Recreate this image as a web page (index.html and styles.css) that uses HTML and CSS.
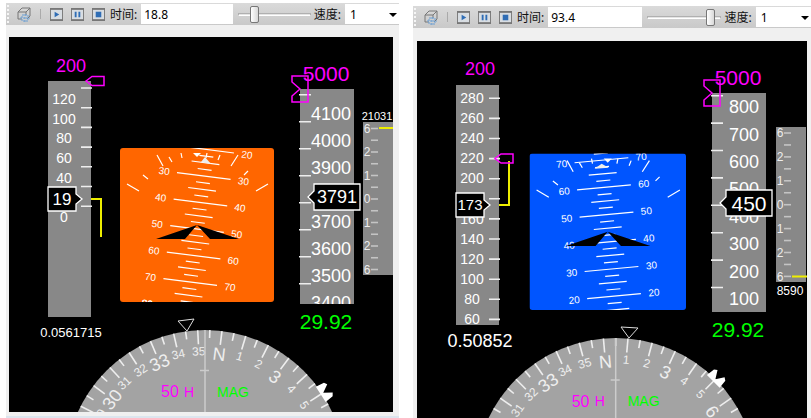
FILE: index.html
```html
<!DOCTYPE html>
<html lang="zh">
<head>
<meta charset="utf-8">
<title>PFD</title>
<link rel="stylesheet" href="styles.css">
</head>
<body>
<main class="screens">

<section class="panel panel-first">
  <div class="toolbar">
    <span class="grip"></span>
    <button class="tool tool-cube" aria-label="3D">
      <svg viewBox="0 0 16 16"><path class="cube" d="M2 6l4-4h8v8l-3 3M2 6h8v3M2 6v7h4M10 6l4-4"/><path class="cube-net" d="M6 9h6v6H6zM4 12h10M9 8v8"/></svg>
    </button>
    <span class="divider"></span>
    <button class="tool" aria-label="play"><svg viewBox="0 0 14 14"><path class="frame" d="M0 0h14v14H0z"/><path class="face" d="M1 2h12v10H1z"/><path class="mark" d="M5 4l5 3-5 3z"/></svg></button>
    <button class="tool" aria-label="pause"><svg viewBox="0 0 14 14"><path class="frame" d="M0 0h14v14H0z"/><path class="face" d="M1 2h12v10H1z"/><path class="mark" d="M4 4h2v6H4zM8 4h2v6H8z"/></svg></button>
    <button class="tool" aria-label="stop"><svg viewBox="0 0 14 14"><path class="frame" d="M0 0h14v14H0z"/><path class="face" d="M1 2h12v10H1z"/><path class="mark" d="M4 4h6v6H4z"/></svg></button>
    <label for="time1">时间:</label>
    <input class="time" id="time1" type="text" value="18.8">
    <input class="seek" type="range" min="0" max="100" value="18" aria-label="时间">
    <label for="speed1">速度:</label>
    <span class="combo"><select id="speed1"><option>1</option><option>2</option></select></span>
  </div>
  <svg class="pfd" id="pfd1" viewBox="9 37 384 375"></svg>
</section>

<section class="panel panel-second">
  <div class="toolbar">
    <span class="grip"></span>
    <button class="tool tool-cube" aria-label="3D">
      <svg viewBox="0 0 16 16"><path class="cube" d="M2 6l4-4h8v8l-3 3M2 6h8v3M2 6v7h4M10 6l4-4"/><path class="cube-net" d="M6 9h6v6H6zM4 12h10M9 8v8"/></svg>
    </button>
    <span class="divider"></span>
    <button class="tool" aria-label="play"><svg viewBox="0 0 14 14"><path class="frame" d="M0 0h14v14H0z"/><path class="face" d="M1 2h12v10H1z"/><path class="mark" d="M5 4l5 3-5 3z"/></svg></button>
    <button class="tool" aria-label="pause"><svg viewBox="0 0 14 14"><path class="frame" d="M0 0h14v14H0z"/><path class="face" d="M1 2h12v10H1z"/><path class="mark" d="M4 4h2v6H4zM8 4h2v6H8z"/></svg></button>
    <button class="tool" aria-label="stop"><svg viewBox="0 0 14 14"><path class="frame" d="M0 0h14v14H0z"/><path class="face" d="M1 2h12v10H1z"/><path class="mark" d="M4 4h6v6H4z"/></svg></button>
    <label for="time2">时间:</label>
    <input class="time" id="time2" type="text" value="93.4">
    <input class="seek" type="range" min="0" max="100" value="92" aria-label="时间">
    <label for="speed2">速度:</label>
    <span class="combo"><select id="speed2"><option>1</option><option>2</option></select></span>
  </div>
  <svg class="pfd" id="pfd2" viewBox="417 41 390 377"></svg>
</section>

</main>
<script src="pfd.js"></script>
</body>
</html>
```
FILE: styles.css
```css
* {
  box-sizing: border-box;
}
body {
  margin: 0;
  background: #fff;
  font-family: "Noto Sans", "Noto Sans CJK SC", sans-serif;
  font-size: 12px;
  color: #111;
}
.screens {
  display: grid;
  grid-template-columns: minmax(0, 393fr) minmax(0, 398fr);
  gap: 14px;
  align-items: start;
  padding: 3px 0 0 6px;
}
.panel {
  background: #f0f0f0;
}
.panel-first {
  padding-bottom: 4px;
  border-bottom: 2px solid #dce5ee;
}
.panel-first .pfd {
  padding: 0 6px 0 3px;
}
.panel-second {
  margin-top: 3px;
}
.panel-second .pfd {
  padding: 0 4px;
}
.toolbar {
  display: flex;
  align-items: center;
  height: 22px;
  margin-bottom: 12px;
  background: linear-gradient(#dadada, #c9c9c9);
}
.panel-second .toolbar {
  margin-bottom: 13px;
}
.grip {
  width: 2px;
  height: 18px;
  margin: 0 7px 0 1px;
  border-left: 2px dotted #f6f6f6;
}
.tool {
  width: 13px;
  height: 13px;
  margin-right: 8px;
  padding: 0;
  border: 0;
  background: none;
  flex: none;
}
.tool svg {
  display: block;
  width: 100%;
  height: 100%;
}
.tool-cube {
  width: 16px;
  height: 16px;
}
.divider {
  width: 1px;
  height: 10px;
  margin: 0 9px 0 0;
  background: #aaa;
}
.cube {
  fill: none;
  stroke: #777;
}
.cube-net {
  fill: none;
  stroke: #6a9fd4;
  stroke-dasharray: 2 1;
}
.frame {
  fill: #777;
}
.face {
  fill: #d8dde2;
}
.mark {
  fill: #2f6db5;
}
label {
  flex: none;
  white-space: nowrap;
  margin-left: -3px;
}
.time {
  flex: 90 1 0;
  min-width: 0;
  height: 20px;
  margin: 0 5px 0 4px;
  padding: 0 3px;
  border: 0;
  background: #fff;
  font: inherit;
}
.seek {
  appearance: none;
  flex: 77 1 0;
  min-width: 0;
  height: 18px;
  margin: 0 6px 0 0;
  background: none;
}
.seek::-webkit-slider-runnable-track {
  height: 3px;
  border: 1px solid #b0b0b0;
  border-bottom-color: #fff;
  background: #e4e4e4;
}
.seek::-webkit-slider-thumb {
  appearance: none;
  width: 9px;
  height: 17px;
  margin-top: -8px;
  border: 1px solid #777;
  border-radius: 2px;
  background: linear-gradient(90deg, #fff, #d8d8d8);
}
.combo {
  position: relative;
  flex: 57 1 0;
  min-width: 0;
  margin-left: 4px;
}
.combo select {
  appearance: none;
  display: block;
  width: 100%;
  height: 20px;
  padding: 0 5px;
  border: 0;
  border-radius: 0;
  background: #fff;
  font: inherit;
}
.combo::after {
  content: "";
  position: absolute;
  right: 2px;
  top: 9px;
  border: 4px solid transparent;
  border-top-color: #000;
  border-bottom: 0;
}
.pfd {
  display: block;
  width: 100%;
  font-family: "Liberation Sans", Arial, sans-serif;
}
.sky {
  fill: #000;
}
.tape {
  fill: #888;
}
.disc {
  fill: #a3a3a3;
}
.white {
  fill: #fff;
}
.soft {
  fill: #eee;
}
.magenta {
  fill: #f0f;
}
.green {
  fill: #0f0;
}
.tick {
  fill: none;
  stroke: #eee;
  stroke-width: 1.6;
}
.tick-vsi {
  fill: none;
  stroke: #c4c4c4;
  stroke-width: 1.6;
}
.ladder {
  fill: none;
  stroke: #fff;
  stroke-width: 1.2;
}
.readout {
  fill: #000;
  stroke: #fff;
  stroke-width: 1.3;
}
.bug {
  fill: none;
  stroke: #f0f;
  stroke-width: 1.5;
}
.trend {
  fill: none;
  stroke: #ee0;
  stroke-width: 2;
}
.cross {
  fill: none;
  stroke: #ccc;
  stroke-width: 1.5;
}
.lubber {
  fill: none;
  stroke: #ddd;
}
```
FILE: pfd.js
```js
const displays = [
  {
    id: "pfd1",
    view: [9, 37, 384, 375],
    speed: { x: 48, top: 81, bottom: 317, tick: 88, step: 19.7, ticks: 7, label: 99, labelX: 64, labels: [120, 100, 80, 60, 40, "", 0],
             value: "19", size: 17, y: 199, target: [71, 66], bugY: 81, bugX: 86, trend: 237, mach: "0.0561715", machSize: 13, machX: 71, machY: 332 },
    att: { x: 120, y: 148, size: 154, color: "#ff6600", cx: 197, cy: 229, angle: 7.3, gap: 26.7, pitch: 50, dir: 1,
           up: "M85 9l-4 5 10 2z" },
    alt: { x: 300, top: 89, bottom: 304, tick: 94.7, step: 27, ticks: 8, label: 114, labelX: 351, labels: [4100, 4000, 3900, "", 3700, 3600, 3500, 3400],
           value: "3791", size: 18, y: 197, baro: 321, title: 73, bugY: 89 },
    vsi: { x: 363, top: 122, bottom: 275, first: 128.5, step: 11.75, needle: 128, text: "21031", textX: 377, textY: 116, size: 11 },
    compass: { x: 205, y: 469.5, r: 139.5, north: 7, bug: 57, pointer: "M178 321L194 319L187 331z" }
  },
  {
    id: "pfd2",
    view: [417, 41, 390, 377],
    speed: { x: 456, top: 85, bottom: 325, tick: 98.3, step: 20.1, ticks: 12, label: 98, labelX: 472, labels: [280, 260, 240, 220, 200, 180, 160, 140, 120, 100, 80, 60],
             value: "173", size: 15, y: 205, target: [480, 69], bugY: 158.5, bugX: 495, trend: 161, mach: "0.50852", machSize: 18, machX: 480, machY: 341 },
    att: { x: 529.5, y: 153.5, size: 156.5, color: "#0055ff", cx: 609, cy: 241.8, angle: -5.3, gap: 27.3, pitch: 40, dir: -1,
           up: "M71 10l-7 5 14-1z" },
    alt: { x: 712, top: 93, bottom: 312, tick: 95.7, step: 27.4, ticks: 8, label: 106.7, labelX: 759, labels: [800, 700, 600, 500, 400, 300, 200, 100],
           value: "450", size: 21, y: 203, baro: 329, title: 77, bugY: 93 },
    vsi: { x: 776, top: 127, bottom: 282, first: 133, step: 11.95, needle: 276.5, text: "8590", textX: 790, textY: 291, size: 12 },
    compass: { x: 615.7, y: 479, r: 141, north: -5, bug: 45, pointer: "M621 327L638 328L629 338z" }
  }
];

function text(x, y, size, cls, str, anchor = "middle", extra = "") {
  return `<text x="${x}" y="${y + size * 0.36}" font-size="${size}" class="${cls}" text-anchor="${anchor}" ${extra}>${str}</text>`;
}

function path(cls, d, extra = "") {
  return `<path class="${cls}" d="${d}" ${extra}/>`;
}

function rect(x, y, w, h, cls) {
  return `<rect x="${x}" y="${y}" width="${w}" height="${h}" class="${cls}"/>`;
}

function clip(id, x, y, w, h, inner) {
  return `<clipPath id="${id}"><rect x="${x}" y="${y}" width="${w}" height="${h}" rx="3"/></clipPath><g clip-path="url(#${id})">${inner}</g>`;
}

function speedTape(id, s) {
  let out = rect(s.x, s.top, 43, s.bottom - s.top, "tape");
  let marks = "";
  for (let i = 0; i < s.ticks; i++) {
    marks += path("tick", `M${s.x + 33} ${s.tick + i * s.step}h11`);
  }
  s.labels.forEach((label, i) => {
    if (label !== "") marks += text(s.labelX, s.label + i * s.step, 14, "white", label);
  });
  out += clip(id + "s", s.x, s.top, 45, s.bottom - s.top, marks);
  out += path("readout", `M${s.x} ${s.y - 12}h28v7l6 5l-6 5v7h-28z`);
  out += text(s.x + 14, s.y, s.size, "white", s.value);
  out += path("trend", `M${s.x + 43} ${s.y}h10V${s.trend}`);
  out += path("bug", `M${s.bugX} ${s.bugY}l6 -4.500h12v9h-12z`);
  out += text(s.target[0], s.target[1], 18, "magenta", 200);
  out += text(s.machX, s.machY, s.machSize, "white", s.mach);
  return out;
}

function attitude(id, a) {
  let ladder = "";
  for (let i = -13; i <= 13; i++) {
    const y = i * a.gap / 4;
    const half = i % 4 === 0 ? 27 : i % 2 === 0 ? 14 : 7;
    ladder += path("ladder", `M${-half} ${y}h${half * 2}`);
    if (i % 4 === 0) {
      const n = a.pitch + a.dir * i / 4 * 10;
      // the outermost rows only show the label that is still inside the frame
      if (i > -12 || a.angle < 0) ladder += text(-40, y, 10, "white", n);
      if (i < 12) ladder += text(40, y, 10, "white", n);
      if (i === 12 && a.angle > 0) ladder += text(-40, y, 10, "white", n);
    }
  }
  let inner = `<rect x="${a.x}" y="${a.y}" width="${a.size}" height="${a.size}" fill="${a.color}"/>`;
  inner += `<g transform="translate(${a.cx} ${a.cy}) rotate(${a.angle})">${ladder}</g>`;
  inner += `<g transform="translate(${a.x} ${a.y}) scale(${a.size / 154})">`;
  inner += path("ladder", "M7 36l12 7M23 27l5 4M37 7l6 11M49 9l3 5M61 5l1 5M87 5l-1 5M100 7l-2 5M118 7l-7 11M128 23l-4 4M148 36l-12 7");
  inner += path("white", "M73 5h8l-4 4z") + path("soft", a.up);
  inner += path("sky", "M77 77L36 91H65zM77 77L119 91H90z");
  inner += "</g>";
  return clip(id + "a", a.x, a.y, a.size, a.size, inner);
}

function altTape(id, t) {
  let out = rect(t.x, t.top, 54, t.bottom - t.top, "tape");
  let marks = "";
  for (let i = 0; i < t.ticks; i++) {
    marks += path("tick", `M${t.x - 1} ${t.tick + i * t.step}h12`);
  }
  t.labels.forEach((label, i) => {
    if (label !== "") marks += text(t.labelX, t.label + i * t.step, 18, "white", label, "end");
  });
  out += clip(id + "t", t.x - 1, t.top, 56, t.bottom - t.top, marks);
  out += path("readout", `M${t.x + 14} ${t.y - 13}h46v26h-46v-7l-6 -6l6 -6z`);
  out += text(t.x + 37, t.y, t.size, "white", t.value);
  out += text(t.x + 26, t.title, 21, "magenta", 5000);
  out += path("bug", `M${t.x - 8} ${t.bugY - 13}h16v26h-16v-6l8 -7l-8 -7z`);
  out += text(t.x + 26, t.baro, 21, "green", "29.92");
  return out;
}

function vsi(v) {
  let out = rect(v.x, v.top, 30, v.bottom - v.top, "tape");
  for (let i = 0; i <= 12; i++) {
    const y = v.first + i * v.step;
    out += path("tick-vsi", `M${v.x + 8} ${y}h7`);
    if (i % 2 === 0) out += text(v.x + 4, y, 12, "soft", [6, 2, 1, 0, 1, 2, 6][i / 2]);
  }
  out += path("trend", `M${v.x + 16} ${v.needle}h15`);
  out += text(v.textX, v.textY, v.size, "white", v.text);
  return out;
}

function compass(c) {
  let out = `<circle cx="${c.x}" cy="${c.y}" r="${c.r}" class="disc"/><g transform="translate(${c.x} ${c.y})">`;
  for (let d = -75; d <= 75; d += 5) {
    const angle = d + c.north;
    const rot = `transform="rotate(${angle})"`;
    out += path("tick", `M0 ${-c.r}v${d % 10 === 0 ? 14 : 8}`, rot);
    if (d % 10 === 0 && angle > -64 && angle < 60) {
      const n = (d / 10 + 36) % 36;
      const big = n % 3 === 0;
      out += text(0, -c.r + (big ? 23 : 21), big ? 18 : 12, "soft", n === 0 ? "N" : n, "middle", rot);
    }
  }
  out += path("white", "M-9 -138L-8 -147L-5 -149L0 -141L5 -149L8 -147L9 -138z", `transform="rotate(${c.bug})"`);
  out += path("cross", `M0 ${-c.r}V0M-5 -99h9`);
  out += text(-44, -78, 16, "magenta", "50", "start") + text(-21, -78, 14, "magenta", "H", "start");
  out += text(12, -78, 14, "green", "MAG", "start") + "</g>";
  return out + path("lubber", c.pointer);
}

displays.forEach(d => {
  document.getElementById(d.id).innerHTML =
    rect(...d.view, "sky") + speedTape(d.id, d.speed) + attitude(d.id, d.att) +
    altTape(d.id, d.alt) + vsi(d.vsi) + compass(d.compass);
});
```
